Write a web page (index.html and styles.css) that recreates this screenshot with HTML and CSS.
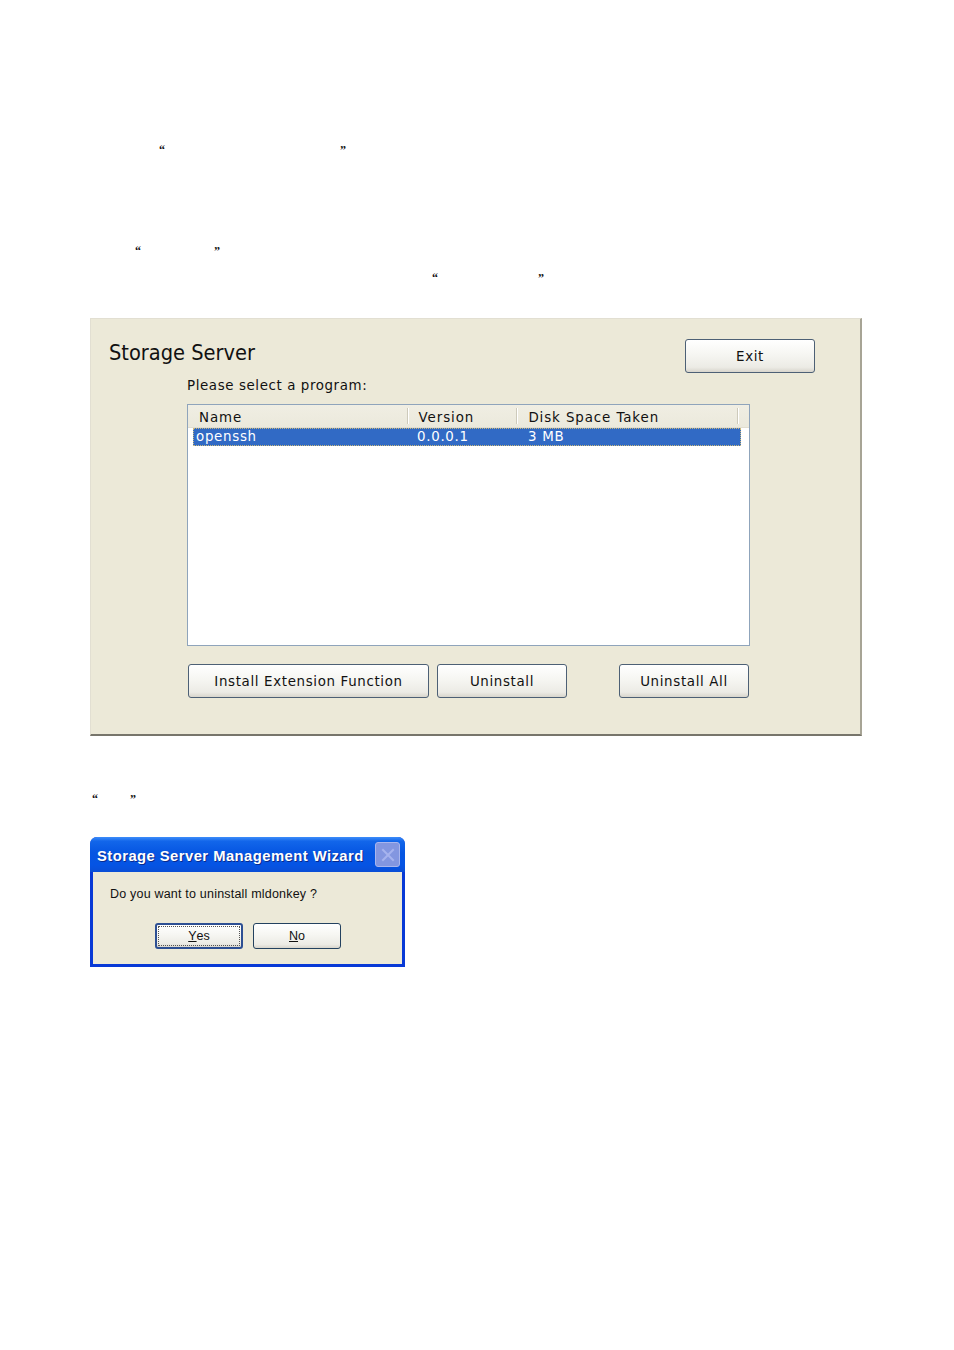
FILE: index.html
```html
<!DOCTYPE html>
<html>
<head>
<meta charset="utf-8">
<link rel="stylesheet" href="styles.css">
</head>
<body>
<div class="page">
  <p class="qline ql-1"><span class="q">“</span><span class="q q-close">”</span></p>
  <p class="qline ql-2"><span class="q">“</span><span class="q q-close">”</span></p>
  <p class="qline ql-3"><span class="q">“</span><span class="q q-close">”</span></p>

  <div class="win">
    <div class="win-head">
      <h1 class="win-title">Storage Server</h1>
      <button class="xpbtn btn-exit">Exit</button>
    </div>
    <div class="win-body">
      <p class="prompt">Please select a program:</p>
      <div class="listbox">
        <div class="lv-head">
          <div class="hcell hc-name">Name</div>
          <div class="hcell hc-ver">Version</div>
          <div class="hcell hc-disk">Disk Space Taken</div>
          <div class="hcell hc-rest"></div>
        </div>
        <div class="lv-row selected">
          <div class="cell c-name">openssh</div>
          <div class="cell c-ver">0.0.0.1</div>
          <div class="cell c-disk">3 MB</div>
        </div>
      </div>
      <div class="actions">
        <button class="xpbtn btn-install">Install Extension Function</button>
        <button class="xpbtn btn-uninst">Uninstall</button>
        <button class="xpbtn btn-all">Uninstall All</button>
      </div>
    </div>
  </div>

  <p class="qline ql-4"><span class="q">“</span><span class="q q-close">”</span></p>

  <div class="dlg">
    <div class="dlg-bar">
      <span class="dlg-title">Storage Server Management Wizard</span>
      <span class="dlg-close">
        <svg width="14" height="14" viewBox="0 0 14 14"><path d="M2 2 L12 12 M12 2 L2 12" stroke="#a6b3ee" stroke-width="2" stroke-linecap="square"/></svg>
      </span>
    </div>
    <div class="dlg-body">
      <p class="dlg-msg">Do you want to uninstall mldonkey ?</p>
      <div class="dlg-actions">
        <button class="xpbtn dbtn dbtn-yes"><span class="focus"><u>Y</u>es</span></button>
        <button class="xpbtn dbtn"><span class="nofocus"><u>N</u>o</span></button>
      </div>
    </div>
  </div>
</div>
</body>
</html>
```

FILE: styles.css
```css
html, body {
  margin: 0;
  padding: 0;
  background: #ffffff;
}
body {
  width: 954px;
  height: 1350px;
  font-family: "DejaVu Sans", Verdana, sans-serif;
  color: #000;
}
.page {
  padding-top: 142px;
}
.qline {
  margin: 0;
  height: 16px;
  line-height: 16px;
  font-family: "Liberation Serif", serif;
  font-size: 12px;
  font-weight: bold;
  color: #111;
  display: flex;
}
.ql-1 { padding-left: 159px; }
.ql-1 .q-close { margin-left: 175px; }
.ql-2 { margin-top: 85px; padding-left: 135px; }
.ql-2 .q-close { margin-left: 73px; }
.ql-3 { margin-top: 11px; padding-left: 432px; }
.ql-3 .q-close { margin-left: 100px; }
.ql-4 { margin-top: 55px; padding-left: 92px; }
.ql-4 .q-close { margin-left: 32px; }

/* main window */
.win {
  margin-top: 32px;
  margin-left: 90px;
  width: 772px;
  height: 418px;
  box-sizing: border-box;
  background: #ece9d8;
  border-top: 1px solid #e2dfd2;
  border-left: 1px solid #e2dfd2;
  border-right: 2px solid #a7a495;
  border-bottom: 2px solid #77756b;
}
.win-head {
  display: flex;
  justify-content: space-between;
  align-items: flex-start;
  padding: 20px 45px 0 18px;
}
.win-title {
  margin: 0;
  padding-top: 1px;
  font-family: "DejaVu Sans Condensed", "DejaVu Sans", sans-serif;
  font-weight: normal;
  font-size: 21.6px;
  line-height: 26px;
  color: #111;
}
.xpbtn {
  box-sizing: border-box;
  margin: 0;
  padding: 0;
  border: 1px solid #4d6075;
  border-radius: 3px;
  background: linear-gradient(#ffffff 0%, #f6f6f2 45%, #ecebe5 85%, #d8d5cc 100%);
  font-family: "DejaVu Sans", Verdana, sans-serif;
  font-size: 13.4px;
  letter-spacing: 0.65px;
  color: #111;
  text-align: center;
}
.btn-exit {
  width: 130px;
  height: 34px;
}
.win-body {
  margin-left: 96px;
  width: 563px;
}
.prompt {
  margin: 4px 0 0 0;
  font-size: 13.4px;
  letter-spacing: 0.6px;
  line-height: 18px;
  color: #111;
}
.listbox {
  margin-top: 9px;
  box-sizing: border-box;
  width: 563px;
  height: 242px;
  border: 1px solid #8fa4bb;
  background: #ffffff;
}
.lv-head {
  display: flex;
  height: 22px;
  background: linear-gradient(#f0eee3, #ebe9dc);
  border-bottom: 1px solid #e0ddd0;
}
.hcell {
  box-sizing: border-box;
  padding-left: 11px;
  font-size: 13.4px;
  letter-spacing: 0.9px;
  line-height: 25px;
  color: #111;
  position: relative;
}
.hcell::after {
  content: "";
  position: absolute;
  right: 0;
  top: 3px;
  bottom: 3px;
  width: 1px;
  background: #cdcabb;
  box-shadow: 1px 0 0 #ffffff;
}
.hc-name { width: 220px; }
.hc-ver { width: 110px; }
.hc-disk { width: 221px; }
.hc-rest { flex: 1; }
.hc-rest::after { display: none; }
.lv-row {
  display: flex;
  margin-left: 5px;
  width: 548px;
  height: 18px;
  box-sizing: border-box;
}
.lv-row.selected {
  background: #316ac5;
  border: 1px dotted #c9b87a;
  color: #fff;
}
.cell {
  box-sizing: border-box;
  padding-left: 2px;
  font-size: 13.4px;
  letter-spacing: 0.7px;
  line-height: 16px;
}
.c-name { width: 221px; }
.c-ver { width: 111px; }
.c-disk { flex: 1; }
.actions {
  display: flex;
  margin-top: 18px;
  margin-left: 1px;
}
.actions .xpbtn { height: 34px; }
.btn-install { width: 241px; }
.btn-uninst { width: 130px; margin-left: 8px; }
.btn-all { width: 130px; margin-left: 52px; }

/* dialog */
.dlg {
  margin-top: 30px;
  margin-left: 90px;
  width: 315px;
  height: 130px;
  box-sizing: border-box;
  background: #0839d6;
  border-radius: 7px 7px 0 0;
  display: flex;
  flex-direction: column;
}
.dlg-bar {
  height: 35px;
  display: flex;
  align-items: center;
  justify-content: space-between;
  padding: 0 5px 0 7px;
  border-radius: 7px 7px 0 0;
  background: linear-gradient(#3d8dfa 0%, #1266ea 12%, #0656e2 45%, #0554e4 80%, #0a4ed6 100%);
}
.dlg-title {
  font-family: "Liberation Sans", Arial, sans-serif;
  font-weight: bold;
  font-size: 14.8px;
  color: #ffffff;
  letter-spacing: 0.45px;
  text-shadow: 1px 1px 0 #0a2a8c;
  padding-top: 2px;
  white-space: nowrap;
}
.dlg-close {
  width: 25px;
  height: 25px;
  box-sizing: border-box;
  border: 1px solid #a9b6ee;
  border-radius: 3px;
  background: #8396e0;
  display: flex;
  align-items: center;
  justify-content: center;
}
.dlg-body {
  flex: 1;
  margin: 0 3px 3px 3px;
  background: #ece9d8;
  padding: 14px 0 0 17px;
}
.dlg-msg {
  margin: 0;
  font-family: "Liberation Sans", Arial, sans-serif;
  font-size: 12.5px;
  letter-spacing: 0.2px;
  line-height: 16px;
  color: #111;
}
.dlg-actions {
  display: flex;
  margin-top: 21px;
  margin-left: 45px;
}
.dbtn {
  width: 88px;
  height: 26px;
  border-color: #23415f;
  font-family: "Liberation Sans", Arial, sans-serif;
  font-size: 12.5px;
  letter-spacing: 0;
  padding: 2px;
}
.dbtn + .dbtn { margin-left: 10px; }
.dbtn-yes {
  border: 2px solid #2d4f93;
  padding: 1px;
}
.focus, .nofocus {
  display: flex;
  align-items: center;
  justify-content: center;
  height: 100%;
  box-sizing: border-box;
}
.focus {
  border: 1px dotted #555;
}
```
